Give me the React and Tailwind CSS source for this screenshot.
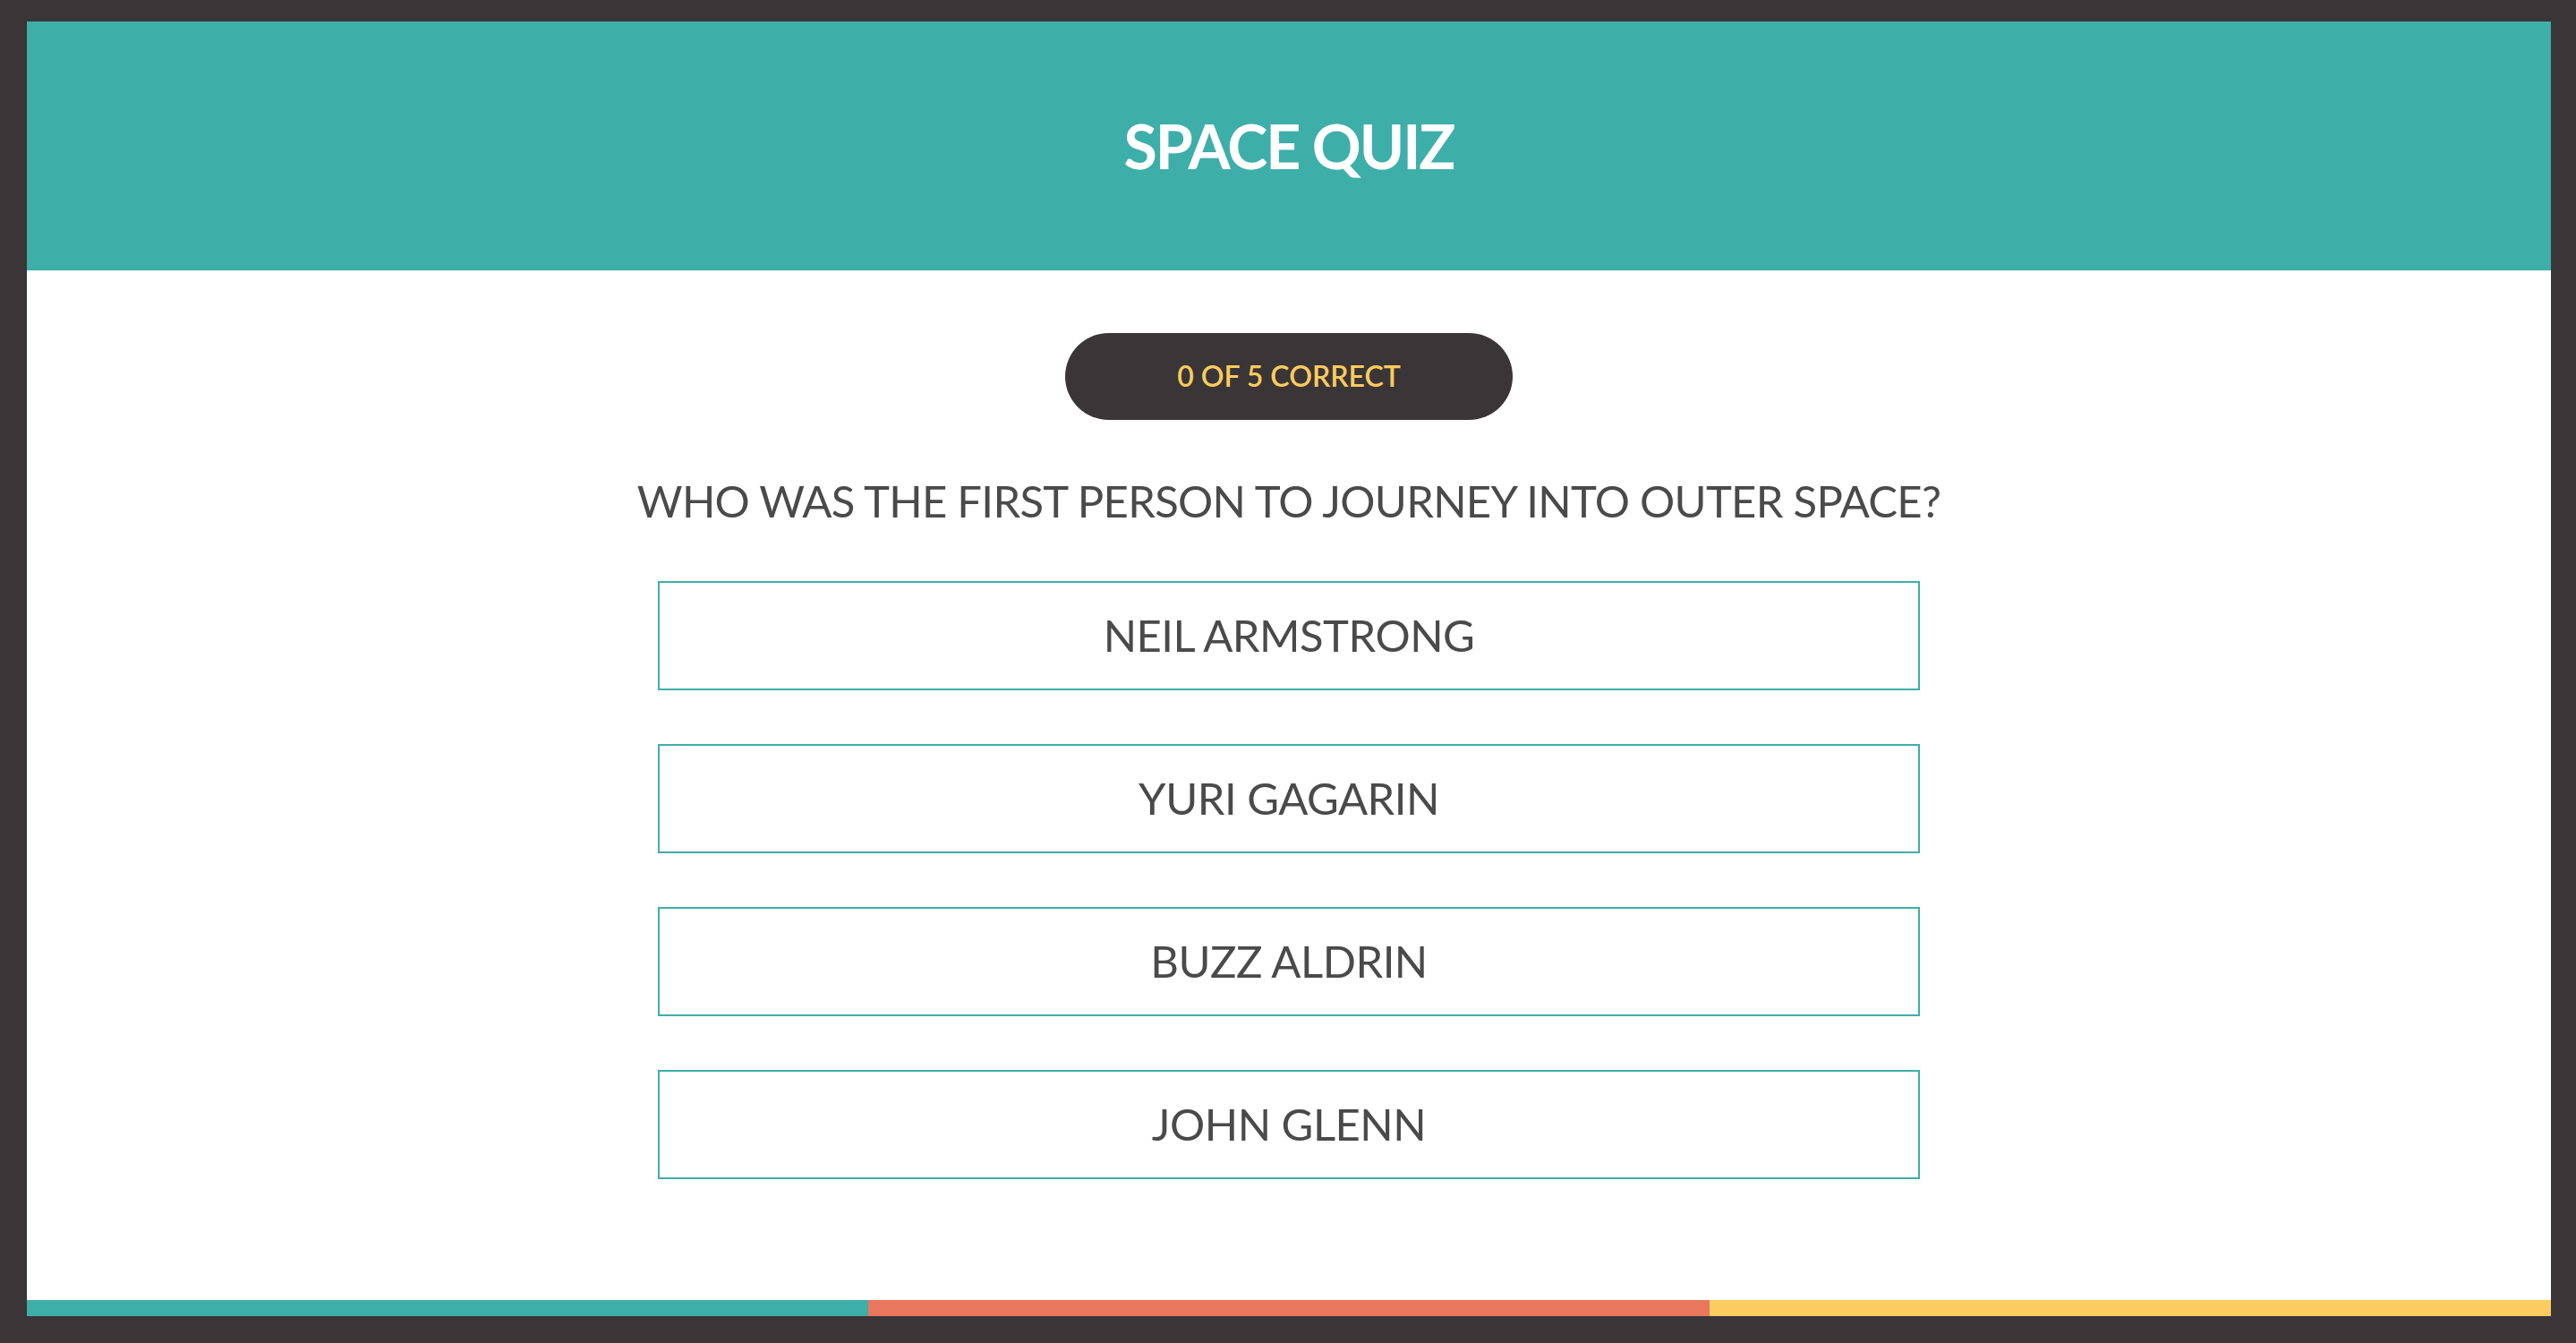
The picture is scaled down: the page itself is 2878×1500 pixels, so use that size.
import React from "react";

const answers = ["NEIL ARMSTRONG", "YURI GAGARIN", "BUZZ ALDRIN", "JOHN GLENN"];

export default function App() {
  return (
    <div
      className="h-[1500px] w-full bg-[#3a3536] pt-[24px] pl-[30px] pr-[28px] pb-[30px]"
      style={{ fontFamily: "Lato, 'Open Sans', sans-serif" }}
    >
      <div className="flex h-full flex-col bg-white">
        <header className="flex h-[278px] shrink-0 items-center justify-center bg-[#3eaea9]">
          <h1 className="text-[68px] font-bold leading-[1.2] tracking-[-2px] text-white">SPACE QUIZ</h1>
        </header>
        <main className="flex flex-1 flex-col items-center pt-[70px]">
          <div className="flex h-[97px] w-[500px] items-center justify-center rounded-full bg-[#3a3536] text-[32px] font-semibold leading-[1.2] text-[#fbcb5f]">
            0 OF 5 CORRECT
          </div>
          <h2 className="mt-[61px] text-[49px] font-normal leading-[1.2] tracking-[-0.7px] text-[#4a4a4a]">
            WHO WAS THE FIRST PERSON TO JOURNEY INTO OUTER SPACE?
          </h2>
          <div className="mt-[60px] flex flex-col gap-[60px]">
            {answers.map((a) => (
              <button
                key={a}
                className="flex h-[122px] w-[1410px] items-center justify-center border-2 border-[#3eaea9] bg-white text-[49px] leading-[1.2] tracking-[-0.5px] text-[#4a4a4a]"
              >
                {a}
              </button>
            ))}
          </div>
        </main>
        <div className="grid h-[18px] shrink-0 grid-cols-3">
          <div className="bg-[#3eaea9]" />
          <div className="bg-[#e9775e]" />
          <div className="bg-[#fbcc62]" />
        </div>
      </div>
    </div>
  );
}
